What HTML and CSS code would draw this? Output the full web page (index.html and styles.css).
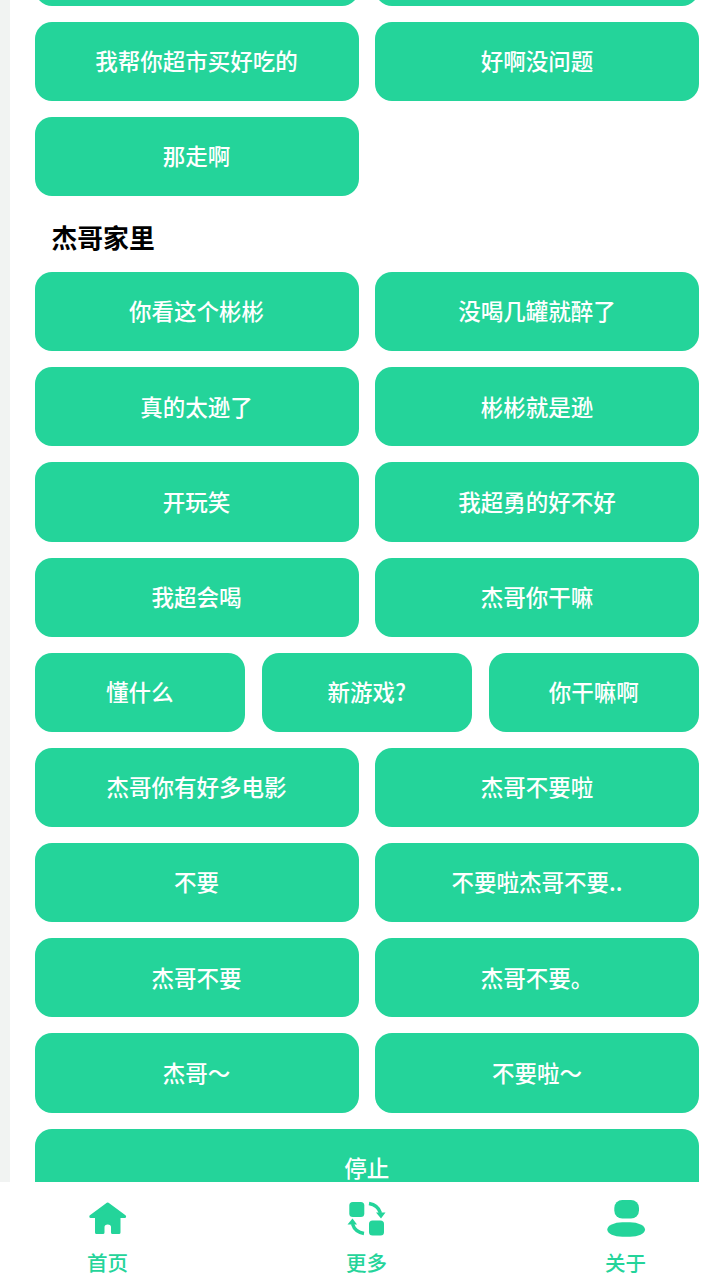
FILE: index.html
```html
<!DOCTYPE html>
<html lang="zh-CN">
<head>
    <meta charset="UTF-8">
    <meta name="viewport" content="width=device-width, initial-scale=1.0">
    <title>音效板</title>
    <link rel="stylesheet" href="styles.css">
</head>
<body>
<div class="page">
    <div class="side-strip"></div>

    <main class="content">
        <div class="scroll-inner">
            <div class="row">
                <button class="sound-btn"></button>
                <button class="sound-btn"></button>
            </div>
            <div class="row">
                <button class="sound-btn">我帮你超市买好吃的</button>
                <button class="sound-btn">好啊没问题</button>
            </div>
            <div class="row">
                <button class="sound-btn">那走啊</button>
                <div class="spacer"></div>
            </div>

            <h2 class="section-title">杰哥家里</h2>

            <div class="row">
                <button class="sound-btn">你看这个彬彬</button>
                <button class="sound-btn">没喝几罐就醉了</button>
            </div>
            <div class="row">
                <button class="sound-btn">真的太逊了</button>
                <button class="sound-btn">彬彬就是逊</button>
            </div>
            <div class="row">
                <button class="sound-btn">开玩笑</button>
                <button class="sound-btn">我超勇的好不好</button>
            </div>
            <div class="row">
                <button class="sound-btn">我超会喝</button>
                <button class="sound-btn">杰哥你干嘛</button>
            </div>
            <div class="row">
                <button class="sound-btn">懂什么</button>
                <button class="sound-btn">新游戏?</button>
                <button class="sound-btn">你干嘛啊</button>
            </div>
            <div class="row">
                <button class="sound-btn">杰哥你有好多电影</button>
                <button class="sound-btn">杰哥不要啦</button>
            </div>
            <div class="row">
                <button class="sound-btn">不要</button>
                <button class="sound-btn">不要啦杰哥不要..</button>
            </div>
            <div class="row">
                <button class="sound-btn">杰哥不要</button>
                <button class="sound-btn">杰哥不要。</button>
            </div>
            <div class="row">
                <button class="sound-btn">杰哥～</button>
                <button class="sound-btn">不要啦～</button>
            </div>
            <div class="row">
                <button class="sound-btn">停止</button>
            </div>
        </div>
    </main>
</div>

<!-- Bottom tabs -->
<nav class="tabbar">
    <a class="tab">
        <svg class="tab-icon" viewBox="0 0 40 40">
            <path class="home" d="M19.7 4 L36.6 16.5 L31 16.5 L31 32.5 L24.5 32.5 L24.5 27 Q24.5 23 19.7 23 Q15 23 15 27 L15 32.5 L8.5 32.5 L8.5 16.5 L2.8 16.5 Z"/>
        </svg>
        <span>首页</span>
    </a>
    <a class="tab">
        <svg class="tab-icon" viewBox="0 0 40 40">
            <rect x="2.3" y="2" width="15" height="15" rx="3.5"/>
            <rect x="22" y="20.5" width="15" height="15" rx="3.5"/>
            <path class="arrow" d="M22 3.5 Q31 5 33.5 13"/>
            <path d="M29 12.5 L38.5 12.5 L34 18.5 Z"/>
            <path class="arrow" d="M17 33.5 Q8 32 5.5 24"/>
            <path d="M0.5 24.5 L10 24.5 L5.5 18.5 Z"/>
        </svg>
        <span>更多</span>
    </a>
    <a class="tab">
        <svg class="tab-icon" viewBox="0 0 40 40">
            <rect x="8.3" y="0" width="24.7" height="18.5" rx="8"/>
            <rect x="1.3" y="22.3" width="37.7" height="14.5" rx="15" ry="7.2"/>
        </svg>
        <span>关于</span>
    </a>
</nav>
</body>
</html>
```

FILE: styles.css
```css
:root {
    --green: #24d49a;
    --strip: #f1f3f2;
}

* {
    box-sizing: border-box;
}

body {
    margin: 0;
    width: 720px;
    height: 1280px;
    overflow: hidden;
    background: #fff;
    font-family: "Noto Sans CJK SC", "Noto Sans", sans-serif;
    display: flex;
    flex-direction: column;
}

.page {
    display: flex;
    height: 1182px;
    overflow: hidden;
}

.side-strip {
    width: 10px;
    background: var(--strip);
}

.content {
    flex: 1;
    padding: 0 21px 0 24.5px;
    overflow: hidden;
}

/* list is scrolled, first row is cut by the top edge */
.scroll-inner {
    margin-top: -73.4px;
    display: flex;
    flex-direction: column;
    gap: 16px;
}

.row {
    display: flex;
    gap: 16.5px;
}

.sound-btn {
    flex: 1 1 0;
    min-width: 0;
    height: 79.2px;
    border: none;
    border-radius: 17px;
    padding: 0 0 2px;
    background: var(--green);
    color: #fff;
    font-family: inherit;
    font-size: 22.5px;
    font-weight: 500;
    line-height: 1;
    cursor: pointer;
}

.spacer {
    flex: 1 1 0;
}

.section-title {
    margin: 0;
    padding: 4px 0 0 17px;
    height: 43.8px;
    display: flex;
    align-items: center;
    color: #000;
    font-size: 25.8px;
    font-weight: 700;
}

/* Bottom tabs */
.tabbar {
    height: 98px;
    padding: 18px 74px 0 87px;
    display: flex;
    justify-content: space-between;
    background: #fff;
}

.tab {
    width: 41px;
    display: flex;
    flex-direction: column;
    align-items: center;
    color: var(--green);
    font-size: 20.5px;
    font-weight: 500;
    line-height: 26px;
}

.tab span {
    margin-top: 9px;
    white-space: nowrap;
}

.tab-icon {
    width: 40px;
    height: 40px;
    flex: none;
    fill: var(--green);
}

.tab-icon .home {
    stroke: var(--green);
    stroke-width: 3;
    stroke-linejoin: round;
}

.tab-icon .arrow {
    fill: none;
    stroke: var(--green);
    stroke-width: 3.4;
}
```
